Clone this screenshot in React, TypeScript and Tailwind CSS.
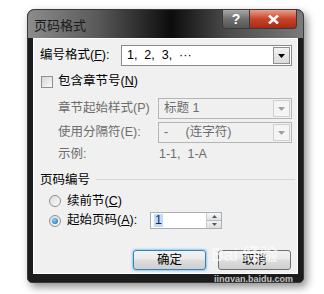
import React from 'react';

const font = { fontFamily: '"Liberation Sans", "Noto Sans CJK SC", sans-serif' };

const Arrow = ({ disabled }: { disabled?: boolean }) => (
    <svg width="7" height="4" viewBox="0 0 7 4">
        <path d="M0 0H7L3.5 4Z" fill={disabled ? '#a0a0a0' : '#000'} />
    </svg>
);

const Combo = ({ value, disabled, width }: { value: string; disabled?: boolean; width: string }) => (
    <div className={`${width} h-[21px] flex items-center border ${disabled ? 'border-[#b5b5b5] bg-[#f0f0f0] text-[#6d6d6d]' : 'border-[#8a8a8a] bg-white text-black'}`}>
        <span className="flex-1 pl-[5px] whitespace-pre">{value}</span>
        <div className={`w-[17px] h-[17px] mr-[1px] flex items-center justify-center border ${disabled ? 'border-[#d0d0d0] bg-[#f4f4f4]' : 'border-[#8e8f8f] bg-[linear-gradient(#f2f2f2,#dcdcdc)]'}`}>
            <Arrow disabled={disabled} />
        </div>
    </div>
);

const Radio = ({ checked }: { checked?: boolean }) => (
    <span className="w-[12px] h-[12px] rounded-full border border-[#8e8f8f] bg-[linear-gradient(135deg,#dcdcdc,#fafafa)] flex items-center justify-center">
        {checked && <span className="w-[6px] h-[6px] rounded-full bg-[radial-gradient(circle_at_40%_35%,#8fd3ff,#0b5fa8)]" />}
    </span>
);

export default function App() {
    return (
        <div className="w-[324px] h-[294px] bg-white relative overflow-hidden pt-[9px] pl-[27px] text-[12.5px] leading-none" style={font}>
            <div className="relative w-[277px] h-[274px] rounded-t-[7px] rounded-b-[5px] bg-[#1c1c1c] border border-[#3a3a3a] shadow-[3px_4px_8px_rgba(0,0,0,0.45)] flex flex-col overflow-hidden">
                {/* title bar */}
                <div className="h-[28px] flex items-start bg-[linear-gradient(90deg,#8c8c8c,#5a5a5a_25%,#0c0c0c_52%,#4a4a4a_72%,#7a7a7a)]">
                    <span className="pl-[6px] pt-[9px] text-[#1a1a1a] text-[13px]">页码格式</span>
                    <div className="ml-auto mr-[6px] flex h-[19px]">
                        <div className="w-[28px] h-[19px] rounded-bl-[4px] border border-[#3a3a3a] border-t-0 bg-[linear-gradient(#a8a8a8,#6f6f6f_50%,#555)] flex items-center justify-center text-white font-bold text-[14px]">?</div>
                        <div className="w-[47px] h-[19px] rounded-br-[4px] border border-[#3a3a3a] border-t-0 border-l-0 bg-[linear-gradient(#e8a08c,#c8442a_50%,#a82a14)] flex items-center justify-center">
                            <svg width="11" height="9" viewBox="0 0 11 9">
                                <path d="M1 0.5L10 8.5M10 0.5L1 8.5" stroke="#fff" strokeWidth="2.6" />
                            </svg>
                        </div>
                    </div>
                </div>

                {/* client area */}
                <div className="mx-[5px] h-[236px] border border-white bg-[#f0f0f0] text-black">
                    <div className="flex items-center h-[21px] mt-[6px] pl-[6px]">
                        <span className="w-[81px]">编号格式(<u>F</u>):</span>
                        <Combo value="1,  2,  3,  ···" width="w-[171px]" />
                    </div>

                    <div className="flex items-center mt-[9px] pl-[7px] h-[13px]">
                        <span className="w-[12px] h-[12px] border border-[#8e8f8f] bg-[linear-gradient(135deg,#d6d6d6,#fbfbfb)]" />
                        <span className="ml-[5px]">包含章节号(<u>N</u>)</span>
                    </div>

                    <div className="flex items-center h-[21px] mt-[10px] pl-[24px] text-[#6d6d6d]">
                        <span className="w-[100px]">章节起始样式(P)</span>
                        <Combo value="标题 1" disabled width="w-[134px]" />
                    </div>
                    <div className="flex items-center h-[21px] mt-[3px] pl-[24px] text-[#6d6d6d]">
                        <span className="w-[100px]">使用分隔符(E):</span>
                        <Combo value="-     (连字符)" disabled width="w-[134px]" />
                    </div>
                    <div className="flex items-center h-[14px] mt-[4px] pl-[24px] text-[#6d6d6d]">
                        <span className="w-[100px]">示例:</span>
                        <span className="pl-[1px] whitespace-pre">1-1,  1-A</span>
                    </div>

                    <div className="flex items-center h-[14px] mt-[12px] pl-[6px]">
                        <span>页码编号</span>
                        <div className="ml-[6px] w-[199px] h-[2px] border-t border-[#d5d5d5] border-b-white" />
                    </div>

                    <div className="flex items-center h-[14px] mt-[7px] pl-[15px]">
                        <Radio />
                        <span className="ml-[6px]">续前节(<u>C</u>)</span>
                    </div>
                    <div className="flex items-center h-[17px] mt-[4px] pl-[15px]">
                        <Radio checked />
                        <span className="ml-[6px] w-[83px]">起始页码(<u>A</u>):</span>
                        <div className="w-[72px] h-[17px] border border-[#abadb3] bg-white flex items-center">
                            <span className="ml-[3px] px-[1px] bg-[#c3dcf4] text-[#0a2a6a] leading-[13px]">1</span>
                            <div className="ml-auto w-[15px] h-[15px] flex flex-col border-l border-[#c8c8c8]">
                                <div className="flex-1 flex items-center justify-center bg-[linear-gradient(#f8f8f8,#e2e2e2)] border-b border-[#b8b8b8]">
                                    <svg width="5" height="3" viewBox="0 0 5 3"><path d="M0 3H5L2.5 0Z" fill="#4a5a70" /></svg>
                                </div>
                                <div className="flex-1 flex items-center justify-center bg-[linear-gradient(#f2f2f2,#dedede)]">
                                    <svg width="5" height="3" viewBox="0 0 5 3"><path d="M0 0H5L2.5 3Z" fill="#4a5a70" /></svg>
                                </div>
                            </div>
                        </div>
                    </div>

                    <div className="flex mt-[21px] pl-[99px] gap-[12px]">
                        <div className="w-[73px] h-[20px] rounded-[3px] border border-[#3c7fb1] shadow-[0_0_2px_1px_#8ecbf0] bg-[linear-gradient(#f2f2f2,#ebebeb_45%,#dddddd_50%,#cfcfcf)] flex items-center justify-center">确定</div>
                        <div className="w-[73px] h-[20px] rounded-[3px] border border-[#707070] bg-[linear-gradient(#f2f2f2,#ebebeb_45%,#dddddd_50%,#cfcfcf)] flex items-center justify-center">取消</div>
                    </div>
                </div>

                {/* watermark */}
                <span className="absolute left-[183px] top-[236px] text-[18px] font-bold text-white/60 tracking-tight">Bai 经验</span>
                <span className="absolute left-[186px] top-[265px] text-[9px] font-bold text-white/75">jingyan.baidu.com</span>
            </div>
        </div>
    );
}
